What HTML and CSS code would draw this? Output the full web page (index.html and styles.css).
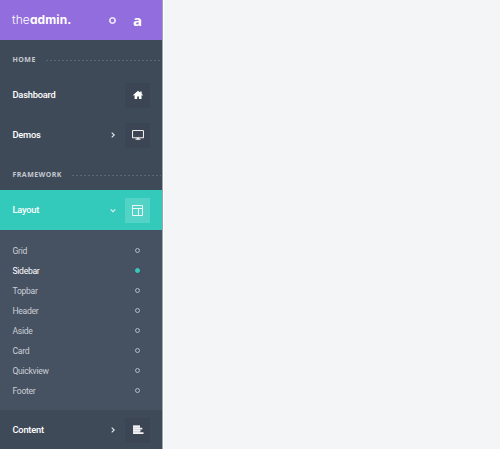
FILE: index.html
```html
<!DOCTYPE html>
<html lang="en">
<head>
<meta charset="utf-8">
<title>TheAdmin</title>
<link rel="stylesheet" href="styles.css">
</head>
<body>
<aside class="sidebar">
  <header class="brand">
    <span class="logo">the<b>admin.</b></span>
    <span class="toggle"></span>
    <span class="mark">a</span>
  </header>
  <nav>
    <div class="category"><span>HOME</span></div>
    <a class="item"><span class="title">Dashboard</span>
      <span class="icon"><svg width="12" height="12" viewBox="0 0 12 12"><path fill="#fff" d="M6 1.8 8.2 3.6V2.5H9.7V4.9L11 6.1 10.4 6.8 9.5 6.1V10H7V7.5H5.2V10H2.6V6.1L1.7 6.8 1.1 6.1Z"/></svg></span>
    </a>
    <a class="item"><span class="title">Demos</span>
      <svg class="arrow" width="6" height="8" viewBox="0 0 6 8"><path d="M1.7 1.7 4.2 4 1.7 6.3"/></svg>
      <span class="icon"><svg width="12" height="12" viewBox="0 0 12 12"><g fill="none" stroke="#f0edef"><rect x=".5" y="1.5" width="11" height="7.3" rx=".8" stroke-width="1.1"/><path d="M3.5 10.2H8.5" stroke-width="1.1"/><path d="M6 8.7V10.4" stroke-width="2.4"/></g></svg></span>
    </a>
    <div class="category"><span>FRAMEWORK</span></div>
    <a class="item active"><span class="title">Layout</span>
      <svg class="arrow" width="6" height="8" viewBox="0 0 6 8"><path d="M.7 3.3 3 5.6 5.3 3.3"/></svg>
      <span class="icon"><svg width="11" height="11" viewBox="0 0 11 11"><path fill="none" stroke="#e8faf7" d="M.5 .5H10.5V10.5H.5ZM.5 3.5H10.5M6.5 3.5V10.5"/></svg></span>
    </a>
    <ul class="submenu">
      <li><span>Grid</span><i></i></li>
      <li class="current"><span>Sidebar</span><i></i></li>
      <li><span>Topbar</span><i></i></li>
      <li><span>Header</span><i></i></li>
      <li><span>Aside</span><i></i></li>
      <li><span>Card</span><i></i></li>
      <li><span>Quickview</span><i></i></li>
      <li><span>Footer</span><i></i></li>
    </ul>
    <a class="item"><span class="title">Content</span>
      <svg class="arrow" width="6" height="8" viewBox="0 0 6 8"><path d="M1.7 1.7 4.2 4 1.7 6.3"/></svg>
      <span class="icon"><svg width="12" height="12" viewBox="0 0 12 12"><path fill="#b9bec8" d="M1 1.6H8V10H1Z"/><path fill="#f4f3f5" d="M1 1.6H8V3.3H1ZM1 3.8H10.3V5.4H1ZM1 6.1H8.6V7.6H1ZM1 8.3H11.5V10H1Z"/></svg></span>
    </a>
  </nav>
</aside>
</body>
</html>
```
FILE: styles.css
```css
* { box-sizing: border-box; }
body {
  margin: 0;
  height: 449px;
  overflow: hidden;
  background: #f3f5f7;
  font-family: Roboto, "Liberation Sans", sans-serif;
}
.sidebar {
  width: 163px;
  height: 449px;
  overflow: hidden;
  background: #3f4a59;
  border-right: 1px solid rgba(255, 255, 255, .5);
  box-shadow: 1px 0 #fff;
}
.brand {
  display: flex;
  align-items: center;
  height: 40px;
  padding-left: 12px;
  background: #926dde;
  color: #fff;
}
.logo {
  width: 96.5px;
  font: 300 12px/40px Inter, sans-serif;
  font-feature-settings: "cv11", "ss01";
  letter-spacing: .1px;
}
.logo b { font-weight: 700; }
.toggle {
  width: 7px;
  height: 7px;
  border: 1.5px solid #fff;
  border-radius: 50%;
  box-shadow: inset 0 0 0 .6px #fff;
}
.mark {
  height: 38px;
  margin-left: 17.5px;
  font: 700 15px/38px "Open Sans", sans-serif;
}
.category {
  display: flex;
  align-items: center;
  gap: 10px;
  height: 35px;
  padding: 5px 1px 0 12.5px;
  color: #c3c8ce;
  font: 700 7px/10px "Open Sans", sans-serif;
  letter-spacing: .45px;
}
.category::after {
  content: "";
  flex: 1;
  height: 1px;
  margin-top: 1px;
  background: repeating-linear-gradient(90deg, #5d6876 0 2px, transparent 2px 4px);
}
.item {
  display: flex;
  align-items: center;
  height: 40px;
  padding: 0 12px 0 12.5px;
  color: #fff;
}
.title {
  flex: 1;
  padding-bottom: 1px;
  font-size: 9.3px;
  line-height: 11px;
  font-weight: 500;
  letter-spacing: -.22px;
}
.arrow {
  margin-right: 9px;
  fill: none;
  stroke: #e9edef;
  stroke-width: 1.1;
}
.icon {
  display: flex;
  align-items: center;
  justify-content: center;
  width: 25px;
  height: 25px;
  border-radius: 1px;
  background: #3c4553;
}
.active { background: #33cabb; }
.active .icon { background: #52d3c6; }
.submenu {
  height: 180px;
  margin: 0;
  padding: 10px 22px 10px 12.5px;
  list-style: none;
  background: #465161;
  color: #cbd0d5;
  font-size: 8.6px;
  letter-spacing: -.3px;
}
.submenu li {
  display: flex;
  align-items: center;
  justify-content: space-between;
  height: 20px;
}
.submenu span { padding-top: 1px; line-height: 10px; }
.submenu i {
  width: 5px;
  height: 5px;
  border: 1px solid #b4bbc3;
  border-radius: 50%;
}
.submenu .current { color: #fff; }
.submenu .current i { border-color: #33cabb; background: #33cabb; }
```
